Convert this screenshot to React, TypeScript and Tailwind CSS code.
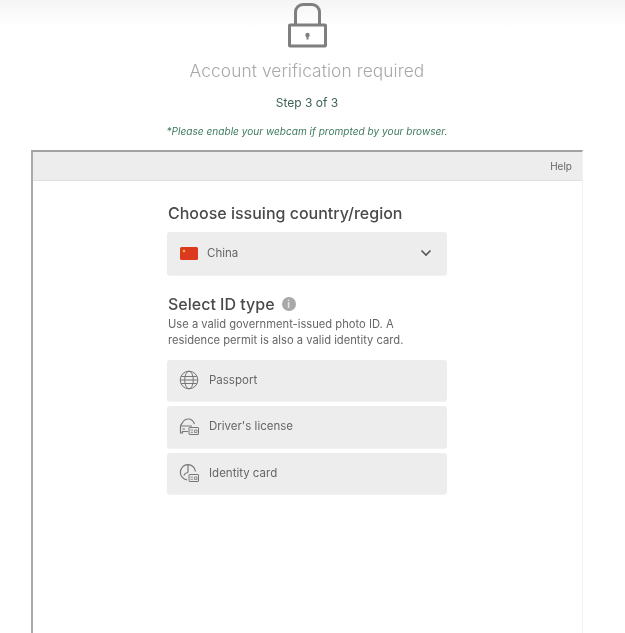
const font = "font-['Inter','Liberation_Sans',sans-serif]";

function Lock() {
  return (
    <svg width="39" height="47" viewBox="0 0 39 47" fill="none" stroke="#7f7f7f" strokeWidth="3">
      <path d="M7.500 24V11a7.500 7.500 0 0 1 7.500-7.500h9A7.500 7.500 0 0 1 31.500 11v13" />
      <rect x="1.500" y="24" width="36" height="21" rx="0.500" />
      <circle cx="19.500" cy="34" r="2.200" fill="#7f7f7f" stroke="none" />
      <rect x="18.500" y="35" width="2" height="3.500" fill="#7f7f7f" stroke="none" />
    </svg>
  );
}

function Globe() {
  return (
    <svg width="20" height="20" viewBox="0 0 20 20" fill="none" stroke="#777" strokeWidth="1">
      <circle cx="10" cy="10" r="8.800" />
      <ellipse cx="10" cy="10" rx="4.300" ry="8.800" />
      <path d="M2.200 6.500h15.600M1.500 10h17M2.200 13.500h15.600" />
    </svg>
  );
}

function Car() {
  return (
    <svg width="20" height="18" viewBox="0 0 20 18" fill="none" stroke="#777" strokeWidth="1.200">
      <path d="M9 13.500H3.500v1.500H1.500V8.500Q1.500 7 3 5.500 5 1 9.500 1q4 0 6 5" />
      <path d="M2 8h11M3.500 11h2.500" />
      <rect x="10" y="9.500" width="9.500" height="7" rx="0.500" fill="#ebebeb" strokeWidth="1" />
      <path d="M11.500 12h2.500M11.500 14.300h2.500M15.500 12h2.500v2.500h-2.500z" strokeWidth="0.800" />
    </svg>
  );
}

function IdCard() {
  return (
    <svg width="20" height="20" viewBox="0 0 20 20" fill="none" stroke="#777" strokeWidth="1.200">
      <path d="M8 16.800A7.600 7.600 0 1 1 16.500 8.500" />
      <path d="M9 1.500V9.500M5 12.500Q5.500 10 9 9.500" />
      <rect x="10" y="11.500" width="9.500" height="7" rx="0.500" fill="#ebebeb" strokeWidth="1" />
      <path d="M11.500 14h2.500M11.500 16.300h2.500M15.500 14h2.500v2.500h-2.500z" strokeWidth="0.800" />
    </svg>
  );
}

function Row({ icon, label }: { icon: React.ReactNode; label: string }) {
  return (
    <div className="flex h-[41.500px] items-center rounded-[3px] bg-[#ededed] shadow-[0_1px_1px_rgba(0,0,0,0.06)]">
      <div className="flex w-[42px] justify-center pl-[1px]">{icon}</div>
      <span className="text-[11.500px] text-[#666]">{label}</span>
    </div>
  );
}

export default function App() {
  return (
    <div className={`${font} h-[633px] w-[625px] overflow-hidden bg-[linear-gradient(#f5f5f5,#ffffff_28px)] blur-[0.4px]`}>
      <div className="flex flex-col items-center pr-[11px]">
        <div className="pt-[1px]"><Lock /></div>
        <h1 className="mt-[12px] text-[17.300px] leading-[22px] font-light tracking-[0.1px] text-[#a8a8a8]">Account verification required</h1>
        <p className="mt-[14px] text-[12px] leading-[14px] text-[#3f6152]">Step 3 of 3</p>
        <p className="mt-[15px] text-[10.100px] leading-[12px] text-[#3d7a5c] italic">*Please enable your webcam if prompted by your browser.</p>
      </div>
      <div className="mt-[13px] ml-[31px] h-[600px] w-[552px] border-t-2 border-r border-l-2 border-t-[#a2a2a2] border-r-[#f1f1f1] border-l-[#a9a9a9]">
        <div className="flex h-[29px] items-center justify-end border-b border-[#e0e0e0] bg-[#ededed] pr-[10px]">
          <span className="text-[10px] text-[#666]">Help</span>
        </div>
        <div className="ml-[134px] w-[280px] pt-[21px]">
          <h2 className="pl-[1px] text-[16px] leading-[22px] font-medium text-[#4a4a4a]">Choose issuing country/region</h2>
          <div className="mt-[8px] flex h-[42.500px] items-center rounded-[3px] bg-[#ededed] pr-[15px] pl-[13px] shadow-[0_1px_1px_rgba(0,0,0,0.06)]">
            <svg width="18" height="13" viewBox="0 0 18 13">
              <rect width="18" height="13" rx="1.500" fill="#dc3a1e" />
              <circle cx="4" cy="4" r="1.300" fill="#f1b544" />
            </svg>
            <span className="ml-[9px] flex-1 text-[11.500px] text-[#666]">China</span>
            <svg width="12" height="8" viewBox="0 0 12 8" fill="none" stroke="#555" strokeWidth="1.600">
              <path d="M1.500 1.500 6 6l4.500-4.500" />
            </svg>
          </div>
          <div className="mt-[18px] flex items-center gap-[7px] pl-[1px]">
            <h2 className="text-[16px] leading-[22px] font-medium text-[#4a4a4a]">Select ID type</h2>
            <span className="flex h-[14px] w-[14px] items-center justify-center rounded-full bg-[#a8a8a8] text-[10px] leading-none font-bold text-[#e5e5e5]">i</span>
          </div>
          <p className="mt-[1px] pl-[1px] text-[11.200px] leading-[16px] text-[#666]">
            Use a valid government-issued photo ID. A<br />residence permit is also a valid identity card.
          </p>
          <div className="mt-[12px] flex flex-col gap-[5px]">
            <Row icon={<Globe />} label="Passport" />
            <Row icon={<Car />} label="Driver's license" />
            <Row icon={<IdCard />} label="Identity card" />
          </div>
        </div>
      </div>
    </div>
  );
}
